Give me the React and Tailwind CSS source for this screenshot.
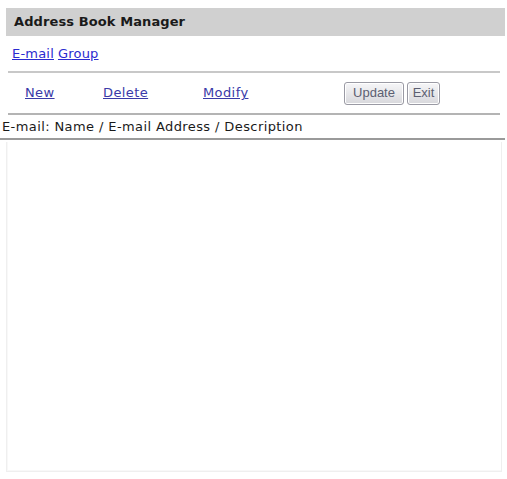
import React from "react";

export default function App() {
  return (
    <div className="w-[507px] h-[479px] bg-white font-['DejaVu_Sans',Verdana,sans-serif] text-[#222] overflow-hidden">
      <div className="pt-[8px] pl-[6px] pr-[2px]">
        <div className="h-[28px] bg-[#d0d0d0] flex items-center pl-[8px] text-[13px] font-bold text-[#1a1a1a] tracking-[0.1px]">
          Address Book Manager
        </div>
      </div>
      <div className="h-[35px] flex items-center pl-[12px] pr-[7px] text-[13px] tracking-[0.2px]">
        <a className="text-[#2b2bd0] underline">E-mail</a>
        <a className="text-[#2b2bd0] underline ml-[4px]">Group</a>
      </div>
      <div className="ml-[8px] mr-[7px] border-t-[2px] border-[#c8c8c8]" />
      <div className="h-[40px] flex items-center ml-[8px] mr-[7px] text-[13px] tracking-[0.4px]">
        <a className="text-[#3a3aa8] underline ml-[17px] w-[78px]">New</a>
        <a className="text-[#3a3aa8] underline w-[100px]">Delete</a>
        <a className="text-[#3a3aa8] underline w-[141px]">Modify</a>
        <div className="flex gap-[3px] font-['Liberation_Sans',Arial,sans-serif] text-[13px] tracking-normal text-[#5c5f72]">
          <button className="h-[23px] w-[60px] rounded-[3px] border border-[#9a9aa4] bg-gradient-to-b from-[#f6f6f8] to-[#d8d8dc] shadow-[inset_0_0_0_1px_#fff]">
            Update
          </button>
          <button className="h-[23px] w-[33px] rounded-[3px] border border-[#9a9aa4] bg-gradient-to-b from-[#f6f6f8] to-[#d8d8dc] shadow-[inset_0_0_0_1px_#fff]">
            Exit
          </button>
        </div>
      </div>
      <div className="ml-[8px] mr-[7px] border-t-[2px] border-[#b4b4b4]" />
      <div className="h-[23px] flex items-center pl-[2px] text-[13px] tracking-[0.4px] text-[#1a1a1a]">
        E-mail: Name / E-mail Address / Description
      </div>
      <div className="mr-[2px] border-t-[2px] border-[#9a9a9a]" />
      <div className="ml-[6px] mr-[5px] mt-[2px] h-[330px] border border-[#efefef] border-t-0 shadow-[inset_1px_-1px_0_#f8f8f8]" />
    </div>
  );
}
